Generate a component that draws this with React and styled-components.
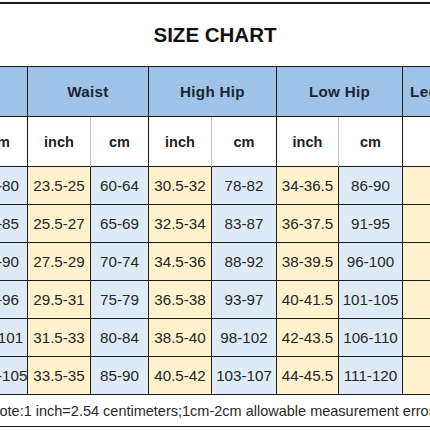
import React from "react";
import styled, { createGlobalStyle } from "styled-components";

const GlobalStyle = createGlobalStyle`
  html, body {
    margin: 0;
    padding: 0;
    background: #ffffff;
  }
  body {
    font-family: "Liberation Sans", Arial, sans-serif;
  }
`;

const LINE = "#1c1c1c";
const SOFT = "#c9c9c9";

const groups = ["Bust", "Waist", "High Hip", "Low Hip"];

const rows = [
  ["30-31.5", "76-80", "23.5-25", "60-64", "30.5-32", "78-82", "34-36.5", "86-90", "72-74"],
  ["32-33.5", "81-85", "25.5-27", "65-69", "32.5-34", "83-87", "36-37.5", "91-95", "73-75"],
  ["34-35.5", "86-90", "27.5-29", "70-74", "34.5-36", "88-92", "38-39.5", "96-100", "74-76"],
  ["36-37.5", "91-96", "29.5-31", "75-79", "36.5-38", "93-97", "40-41.5", "101-105", "75-77"],
  ["38-39.5", "97-101", "31.5-33", "80-84", "38.5-40", "98-102", "42-43.5", "106-110", "76-78"],
  ["40-41.5", "102-105", "33.5-35", "85-90", "40.5-42", "103-107", "44-45.5", "111-120", "77-79"],
];

const Page = styled.div`
  width: 430px;
  height: 430px;
  overflow: hidden;
  padding-top: 2px;
  box-sizing: border-box;
`;

const Sheet = styled.div`
  width: 620px;
  margin-left: -91px;
  border-top: 2px solid ${LINE};
`;

// centred over the visible part of the sheet
const Title = styled.h1`
  margin: 0;
  height: 62px;
  display: flex;
  align-items: center;
  justify-content: center;
  padding-left: 91px;
  width: 521px;
  box-sizing: border-box;
  font-size: 20.5px;
  font-weight: 700;
  color: #111;
`;

const Grid = styled.div`
  display: grid;
  grid-template-columns: 63px 56px 63px 58px 63px 65px 62px 64px 100px;
  grid-template-rows: 50px 50px repeat(6, 38px) 32px;
  border-top: 1.5px solid ${LINE};
`;

const Cell = styled.div`
  box-sizing: border-box;
  display: flex;
  align-items: center;
  justify-content: center;
  grid-column: span ${(p) => p.$span || 1};
  background: ${(p) => p.$bg || "#ffffff"};
  border-bottom: 1.5px solid ${LINE};
  border-right: 1.5px solid
    ${(p) => (p.$edge === "soft" ? SOFT : p.$edge === "none" ? "transparent" : LINE)};
  font-size: ${(p) => p.$size || 15.2}px;
  font-weight: ${(p) => (p.$bold ? 700 : 400)};
  color: ${(p) => p.$color || "#262626"};
  white-space: nowrap;
`;

const HeadCell = styled(Cell).attrs({ $bold: true, $bg: "#9fc3e7", $color: "#1d2633" })`
  letter-spacing: 0.3px;
`;

const SubCell = styled(Cell).attrs({ $bold: true, $size: 14.5, $color: "#1e1e1e" })``;

const NoteCell = styled(Cell)`
  grid-column: 1 / -1;
  justify-content: flex-start;
  padding-left: 80px;
  font-size: 14.5px;
  color: #2a2a2a;
  border-right: none;
`;

export default function App() {
  return (
    <Page>
      <GlobalStyle />
      <Sheet>
        <Title>SIZE CHART</Title>
        <Grid>
          {groups.map((g) => (
            <HeadCell key={g} $span={2}>
              {g}
            </HeadCell>
          ))}
          <HeadCell>Leg Length</HeadCell>

          {groups.map((g) => (
            <React.Fragment key={g}>
              <SubCell $edge="soft">inch</SubCell>
              <SubCell>cm</SubCell>
            </React.Fragment>
          ))}
          <SubCell>cm</SubCell>

          {rows.map((r, i) =>
            r.map((v, j) => (
              <Cell
                key={`${i}-${j}`}
                $bg={j % 2 === 0 ? "#fff2cd" : "#deebf7"}
              >
                {v}
              </Cell>
            ))
          )}

          <NoteCell>
            Note:1 inch=2.54 centimeters;1cm-2cm allowable measurement error
          </NoteCell>
        </Grid>
      </Sheet>
    </Page>
  );
}
